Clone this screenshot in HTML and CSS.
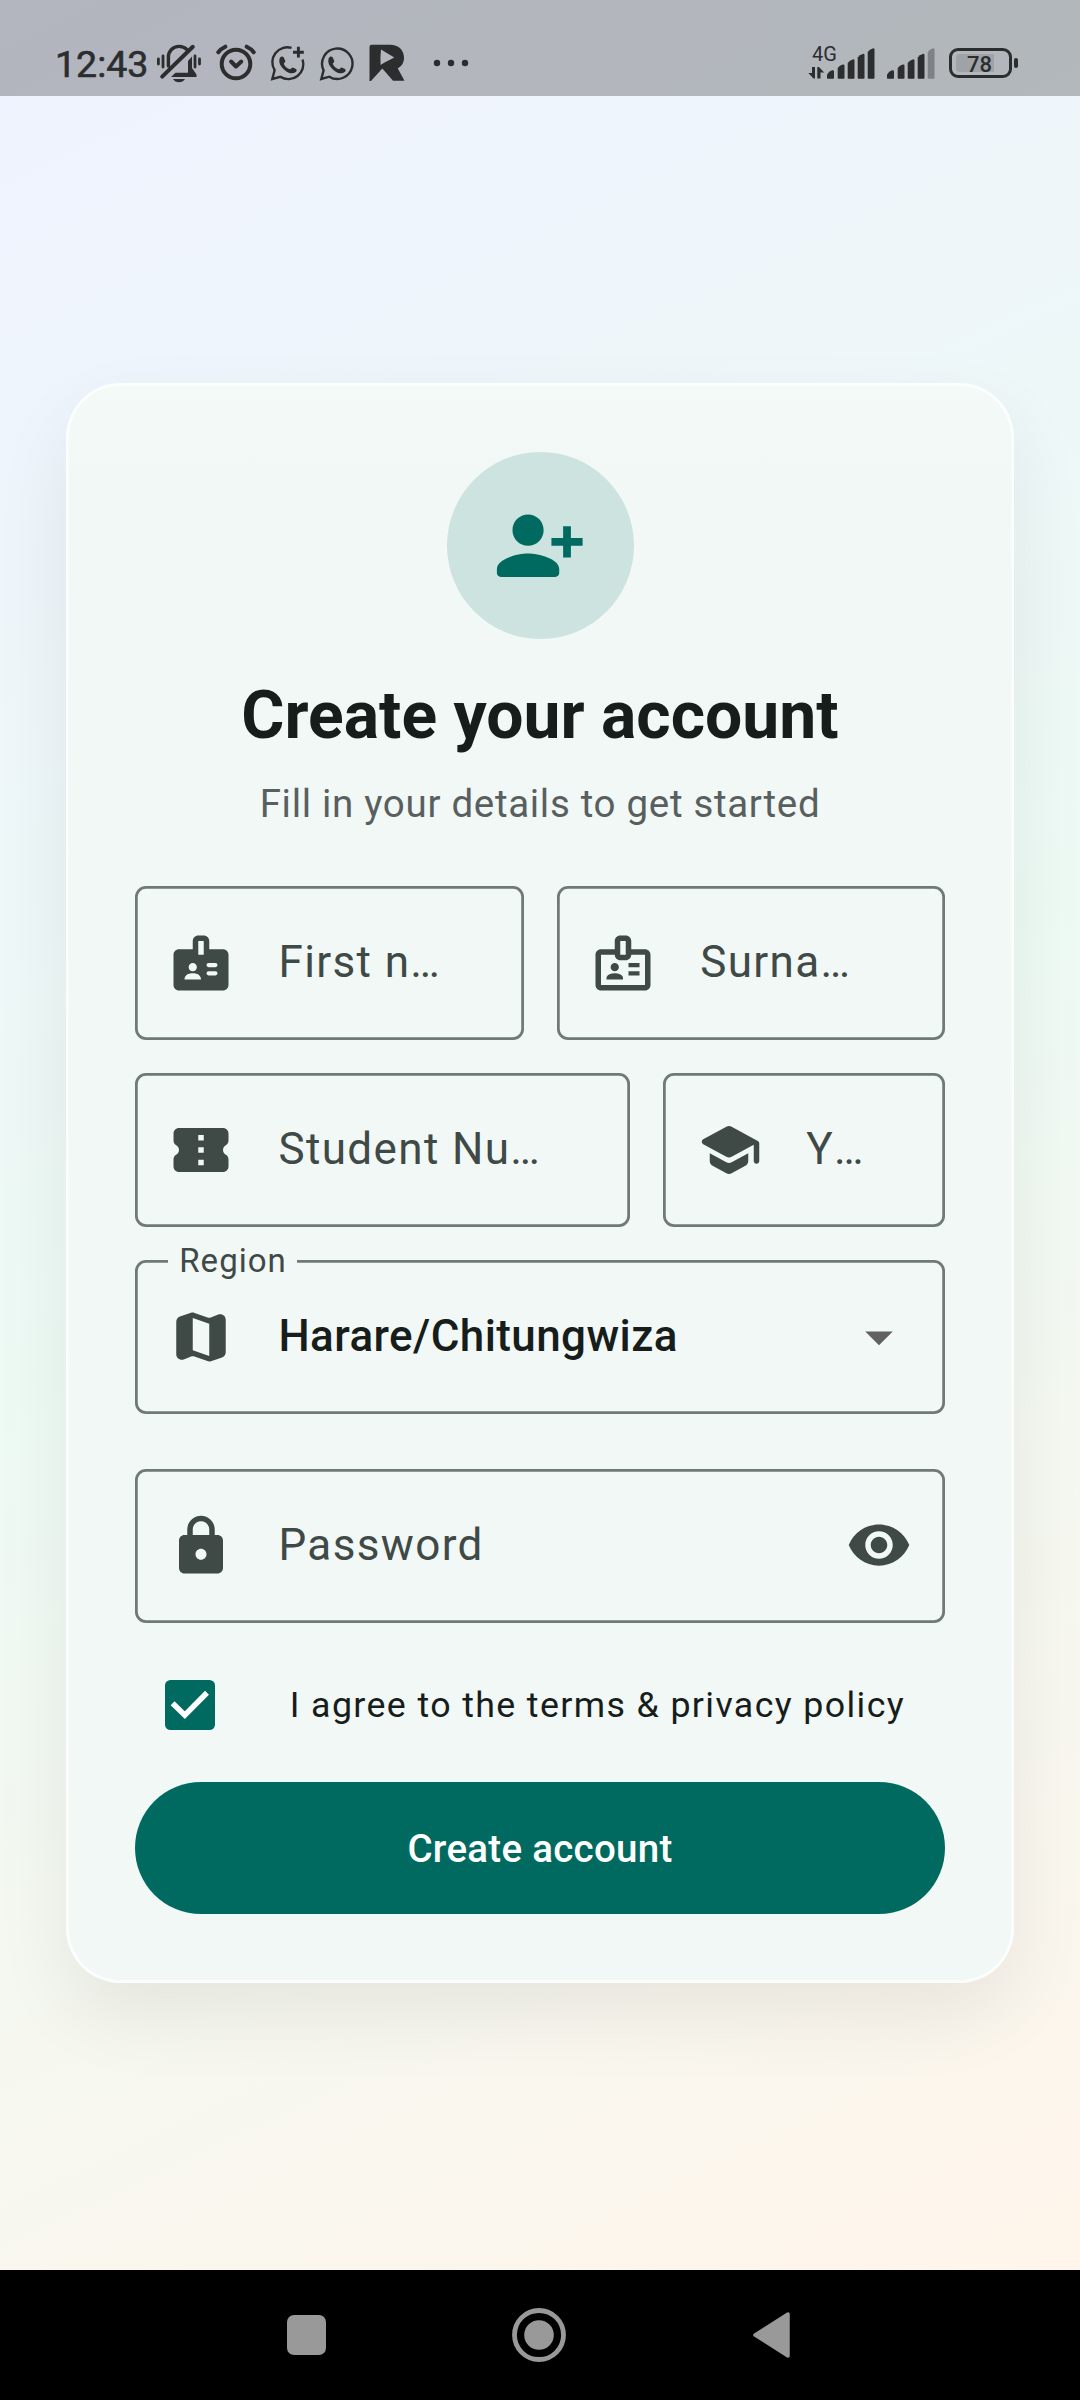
FILE: index.html
```html
<!DOCTYPE html>
<html lang="en">
<head>
<meta charset="utf-8">
<title>Create your account</title>
<link rel="stylesheet" href="styles.css">
</head>
<body>
<header class="status">
  <div class="status-left">
    <span class="clock">12:43</span>
    <svg class="i-bell" width="46" height="42" viewBox="156 43 46 42">
      <g fill="none" stroke="currentColor" stroke-width="3.400" stroke-linecap="round">
        <path d="M168.400 66V57c0-6 4.600-10.600 10.600-10.600 3.500 0 6 1.200 8 3.200"/>
        <path d="M192.800 46.800L162.200 76.600" stroke-width="4"/>
        <path d="M158.400 59v5M163 56v11M195 56v11M199.500 59v5" stroke-width="2.800"/>
      </g>
      <path d="M192 56.500V68l4.500 6.500V77H171l4.500-4.300H188V61z" fill="currentColor"/>
      <path d="M173 79h12c-1.500 2.200-3.500 3.300-6 3.300s-4.500-1.100-6-3.300z" fill="currentColor"/>
    </svg>
    <svg class="i-alarm" width="42" height="40" viewBox="214.500 43 42 40">
      <g fill="none" stroke="currentColor" stroke-width="4" stroke-linecap="round" stroke-linejoin="round">
        <circle cx="235.500" cy="64" r="14.300"/>
        <path d="M217.800 52.200q2.500-3.400 7-5.500M253.200 52.200q-2.500-3.400-7-5.500"/>
        <path d="M230.600 61.500l4.900 5 5.300-5"/>
      </g>
    </svg>
    <svg class="i-wa1" width="36" height="36" viewBox="269.500 45 36 36">
      <path d="M291 47.900a15 15 0 0 0-16.900 22.300L271.800 79l8-2.200a15 15 0 0 0 22.300-17.300" fill="none" stroke="currentColor" stroke-width="2.400"/>
      <path d="M292.500 52.200h10.800M297.900 46.800v10.800" stroke="currentColor" stroke-width="2.900"/>
      <path transform="translate(-49.500 0)" d="M328.800 58c1-2 3-2.100 4-.5l1.500 3.500c0 1.500-1.600 2-1.500 3 1.500 3 3.500 4.500 6 5.300 1 0 2-2 3-1.900l3.200 1.600c1.200 1 .5 2.400-.3 3.100-3 2.300-7 1-10-1.200-3.300-2.500-5.800-5.600-6.300-8.400-.2-1.600 0-3.300.4-4.500z" fill="currentColor"/>
    </svg>
    <svg class="i-wa2" width="36" height="36" viewBox="319 45 36 36">
      <path d="M321.300 79l2.300-8.600a15.200 15.200 0 1 1 5.700 6.300z" fill="none" stroke="currentColor" stroke-width="2.400"/>
      <path d="M328.800 58c1-2 3-2.100 4-.5l1.500 3.500c0 1.500-1.600 2-1.500 3 1.500 3 3.500 4.500 6 5.300 1 0 2-2 3-1.900l3.200 1.600c1.200 1 .5 2.400-.3 3.100-3 2.300-7 1-10-1.200-3.300-2.500-5.800-5.600-6.300-8.400-.2-1.600 0-3.300.4-4.500z" fill="currentColor"/>
    </svg>
    <svg class="i-r" width="36" height="38" viewBox="369 44 36 38">
      <path fill="currentColor" fill-rule="evenodd" d="M371.500 44.700H390c8.500 0 14 5.300 14 13 0 5-2.400 8.600-6.300 10.600l6.800 12.400H393l-10.700-12.200L371 81h-1.500V46.700a2 2 0 0 1 2-2zM381 49.500q-.9 7.500-.4 15.500l3.500-2.300 10.200-5.200z"/>
    </svg>
    <svg class="i-dots" width="36" height="8" viewBox="433 59 36 8">
      <g fill="currentColor"><circle cx="437" cy="63" r="3.200"/><circle cx="451" cy="63" r="3.200"/><circle cx="465" cy="63" r="3.200"/></g>
    </svg>
  </div>
  <div class="status-right">
    <div class="net">
      <span class="net-type">4G</span>
      <svg width="17" height="12" viewBox="808 67 17 12"><path fill="currentColor" d="M812 67h3v11.500h-1.500L808.300 73h3.700zM817.300 67h1.700l5.200 5.500h-3.700v6h-3.200z"/></svg>
    </div>
    <svg class="bars" width="48" height="31" viewBox="0 0 48 31">
      <g fill="currentColor"><path d="M0 30V26.500Q2 23 5 22.300q2-.3 2 1V30q0 .8-.8.800H.8Q0 30.800 0 30z"/><path d="M10.700 30V20q2-2.800 5-3.500 1.800-.2 1.800 1V30q0 .8-.8.800h-5.200q-.8 0-.8-.8z"/><path d="M20.700 30V15q2-3 5-3.600 1.800-.2 1.800 1V30q0 .8-.8.800h-5.200q-.8 0-.8-.8z"/><path d="M30.700 30V9.500q2-3 5-3.600 1.800-.2 1.800 1V30q0 .8-.8.800h-5.200q-.8 0-.8-.8z"/><path d="M40.700 30V4q2-3 5-3.600 1.800-.2 1.800 1V30q0 .8-.8.800h-5.200q-.8 0-.8-.8z"/></g>
    </svg>
    <svg class="bars bars-2" width="48" height="31" viewBox="0 0 48 31">
      <g fill="currentColor"><path d="M0 30V26.500Q2 23 5 22.300q2-.3 2 1V30q0 .8-.8.800H.8Q0 30.800 0 30z"/><path d="M10.700 30V20q2-2.800 5-3.500 1.800-.2 1.800 1V30q0 .8-.8.800h-5.200q-.8 0-.8-.8z"/><path d="M20.700 30V15q2-3 5-3.600 1.800-.2 1.800 1V30q0 .8-.8.800h-5.200q-.8 0-.8-.8z"/><path d="M30.700 30V9.500q2-3 5-3.600 1.800-.2 1.800 1V30q0 .8-.8.800h-5.200q-.8 0-.8-.8z"/><path opacity=".38" d="M40.700 30V4q2-3 5-3.600 1.800-.2 1.800 1V30q0 .8-.8.800h-5.200q-.8 0-.8-.8z"/></g>
    </svg>
    <div class="battery"><span class="battery-level">78</span></div>
    <i class="battery-nub"></i>
  </div>
</header>

<main class="screen">
  <form class="card">
    <div class="avatar">
      <svg width="93.500" height="93.500" viewBox="0 0 24 24"><path fill="currentColor" d="M13 8c0-2.210-1.790-4-4-4S5 5.790 5 8s1.790 4 4 4 4-1.790 4-4zm2 2v2h3v3h2v-3h3v-2h-3V7h-2v3h-3zM1 18v1c0 .55.45 1 1 1h14c.55 0 1-.45 1-1v-1c0-2.660-5.330-4-8-4s-8 1.340-8 4z"/></svg>
    </div>
    <h1 class="title">Create your account</h1>
    <p class="subtitle">Fill in your details to get started</p>

    <div class="row">
      <div class="field">
        <svg class="icon" viewBox="0 0 24 24"><path fill="currentColor" fill-rule="evenodd" d="M20 7h-5V4c0-1.100-.9-2-2-2h-2c-1.100 0-2 .9-2 2v3H4c-1.100 0-2 .9-2 2v11c0 1.100.9 2 2 2h16c1.100 0 2-.9 2-2V9c0-1.100-.9-2-2-2zM9 12c.83 0 1.500.67 1.500 1.500S9.830 15 9 15s-1.500-.67-1.500-1.500S8.170 12 9 12zm3 6H6c0-1.500 1.300-2.250 3-2.250s3 .75 3 2.250zm1-9h-2V4h2v5zm4.250 7.500h-2.500a.75.75 0 0 1 0-1.500h2.500a.75.75 0 0 1 0 1.500zm0-3h-2.500a.75.75 0 0 1 0-1.500h2.500a.75.75 0 0 1 0 1.500z"/></svg>
        <span class="label">First n…</span>
      </div>
      <div class="field">
        <svg class="icon" viewBox="0 0 24 24"><path fill="currentColor" fill-rule="evenodd" d="M20 7h-5V4c0-1.100-.9-2-2-2h-2c-1.100 0-2 .9-2 2v3H4c-1.100 0-2 .9-2 2v11c0 1.100.9 2 2 2h16c1.100 0 2-.9 2-2V9c0-1.100-.9-2-2-2zm-9-3h2v5h-2V4zm9 16H4V9h5c0 1.100.9 2 2 2h2c1.100 0 2-.9 2-2h5v11z"/><path fill="currentColor" d="M9 12a1.500 1.500 0 1 1 0 3 1.500 1.500 0 0 1 0-3zM6 18v-.43c0-.6.36-1.150.92-1.390A5.300 5.300 0 0 1 9 15.750c.74 0 1.440.15 2.080.43.560.240.920.79.920 1.390V18zM14 12h4v1.500h-4zM14 15h4v1.500h-4z"/></svg>
        <span class="label">Surna…</span>
      </div>
    </div>

    <div class="row row-student">
      <div class="field">
        <svg class="icon" viewBox="0 0 24 24"><path fill="currentColor" d="M20 12c0-.76.43-1.420 1.060-1.760.6-.33.94-1.010.94-1.700V6c0-1.100-.9-2-2-2H4c-1.100 0-1.990.9-1.990 2v2.540c0 .69.330 1.370.94 1.690C3.580 10.580 4 11.240 4 12s-.43 1.430-1.060 1.760c-.6.330-.94 1.010-.94 1.700V18c0 1.100.9 2 2 2h16c1.100 0 2-.9 2-2v-2.540c0-.69-.34-1.370-.94-1.700-.63-.34-1.060-1-1.060-1.760zm-7 5.500h-2v-2h2v2zm0-4.500h-2v-2h2v2zm0-4.500h-2v-2h2v2z"/></svg>
        <span class="label">Student Nu…</span>
      </div>
      <div class="field">
        <svg class="icon" viewBox="0 0 24 24"><path fill="currentColor" d="M5 13.180v2.810c0 .73.4 1.410 1.040 1.760l5 2.730c.6.330 1.320.330 1.920 0l5-2.730c.64-.35 1.040-1.030 1.040-1.760v-2.810l-6.040 3.300c-.6.330-1.320.330-1.920 0L5 13.180zm6.040-9.660l-8.430 4.600c-.69.380-.69 1.380 0 1.760l8.430 4.600c.6.330 1.320.330 1.920 0L21 10.090V16c0 .55.450 1 1 1s1-.45 1-1V9.590c0-.37-.2-.7-.52-.88l-9.520-5.190c-.6-.32-1.320-.32-1.920 0z"/></svg>
        <span class="label label-year">Y…</span>
      </div>
    </div>

    <div class="field field-region">
      <span class="legend">Region</span>
      <svg class="icon" viewBox="0 0 24 24"><path fill="currentColor" d="M14.650 4.980l-5-1.750c-.42-.15-.88-.15-1.300-.01L4.360 4.560C3.550 4.840 3 5.600 3 6.460v11.850c0 1.410 1.410 2.370 2.720 1.860l2.930-1.140c.22-.09.47-.09.69-.01l5 1.750c.42.150.88.150 1.300.01l3.990-1.340c.81-.27 1.360-1.040 1.360-1.900V5.690c0-1.410-1.410-2.370-2.720-1.860l-2.930 1.140c-.22.080-.46.090-.69.010zM15 18.890l-6-2.110V5.110l6 2.110v11.670z"/></svg>
      <span class="value">Harare/Chitungwiza</span>
      <svg class="icon arrow" viewBox="0 0 24 24"><path fill="currentColor" d="M7 10l5 5 5-5z"/></svg>
    </div>

    <div class="field field-password">
      <svg class="icon" viewBox="0 0 24 24"><path fill="currentColor" d="M18 8h-1V6c0-2.760-2.240-5-5-5S7 3.240 7 6v2H6c-1.100 0-2 .9-2 2v10c0 1.100.9 2 2 2h12c1.100 0 2-.9 2-2V10c0-1.100-.9-2-2-2zm-6 9c-1.100 0-2-.9-2-2s.9-2 2-2 2 .9 2 2-.9 2-2 2zM9 8V6c0-1.660 1.340-3 3-3s3 1.340 3 3v2H9z"/></svg>
      <span class="label">Password</span>
      <svg class="icon eye" viewBox="0 0 24 24"><path fill="currentColor" d="M12 4.500C7 4.500 2.730 7.610 1 12c1.730 4.390 6 7.500 11 7.500s9.270-3.110 11-7.500c-1.730-4.390-6-7.500-11-7.500zM12 17c-2.760 0-5-2.240-5-5s2.240-5 5-5 5 2.240 5 5-2.240 5-5 5zm0-8c-1.660 0-3 1.340-3 3s1.340 3 3 3 3-1.340 3-3-1.340-3-3-3z"/></svg>
    </div>

    <div class="terms">
      <span class="checkbox"><svg width="49.500" height="49.500" viewBox="0 0 49.500 49.500"><path d="M7.600 23.300L19.800 35.200L42 12.700" fill="none" stroke="#fff" stroke-width="5.500"/></svg></span>
      <span class="terms-text">I agree to the terms &amp; privacy policy</span>
    </div>
    <button class="submit" type="button">Create account</button>
  </form>
</main>

<nav class="navbar">
  <svg width="39" height="40" viewBox="0 0 39 40"><rect width="39" height="40" rx="7" fill="currentColor"/></svg>
  <svg width="54" height="54" viewBox="0 0 54 54"><circle cx="27" cy="27" r="24.500" fill="none" stroke="currentColor" stroke-width="4.800"/><circle cx="27" cy="27" r="14.800" fill="currentColor"/></svg>
  <svg width="38" height="46" viewBox="0 0 38 46"><path d="M3 23L36 2V44z" fill="currentColor" stroke="currentColor" stroke-width="3.500" stroke-linejoin="round"/></svg>
</nav>
</body>
</html>
```

FILE: styles.css
```css
* { box-sizing: border-box; }

body {
  margin: 0;
  width: 1080px;
  height: 2400px;
  display: flex;
  flex-direction: column;
  overflow: hidden;
  font-family: Roboto, "Noto Sans", sans-serif;
  color: #171d1b;
  background: #000 linear-gradient(154.560deg, #eff2ff 0%, #edfaf4 50%, #fff5eb 100%) 0 0 / 1080px 2270px no-repeat;
}

svg { display: block; flex: none; }

/* Status bar */
.status {
  flex: none;
  height: 96px;
  display: flex;
  justify-content: space-between;
  background: rgba(0, 0, 0, .25);
  color: #2b2d2f;
}
.status-left {
  display: flex;
  align-items: center;
  height: 126px;
  padding-left: 55px;
}
.clock {
  width: 101px;
  padding-top: 2px;
  font-size: 37.500px;
  line-height: 44px;
  font-weight: 400;
  -webkit-text-stroke: .6px currentColor;
  white-space: nowrap;
}
.i-bell { margin-top: 2px; }
.i-alarm { margin-left: 12.500px; }
.i-wa1 { margin-left: 13px; }
.i-wa2 { margin-left: 13.500px; }
.i-r { margin-left: 14px; }
.i-dots { margin-left: 28px; }

.status-right {
  display: flex;
  align-items: flex-start;
  padding: 48px 62px 0 0;
}
.net { width: 28px; margin-right: -8.500px; }
.net-type {
  display: block;
  margin: -3px 0 0 4px;
  font-size: 20px;
  line-height: 18px;
  height: 22px;
  white-space: nowrap;
}
.bars-2 { margin-left: 11.600px; }
.battery {
  width: 63px;
  height: 30px;
  margin-left: 14px;
  padding: 3px 4px;
  border: 3px solid currentColor;
  border-radius: 9px;
}
.battery-level {
  display: block;
  width: 38px;
  height: 18px;
  padding-left: 11px;
  border-radius: 4px 0 0 4px;
  background: #9fa2a6;
  font-size: 22px;
  line-height: 21px;
  font-weight: 500;
}
.battery-nub {
  width: 4px;
  height: 10px;
  margin: 10px 0 0 2px;
  border-radius: 2px;
  background: currentColor;
}

/* Sign-up card */
.screen {
  flex: 1;
  display: flex;
  align-items: center;
  justify-content: center;
}
.card {
  width: 948px;
  padding: 68.750px;
  border-radius: 55px;
  background: linear-gradient(#f3faf8 0, #f1f8f6 80px, #f1f8f6 70%, #f2f8f5 100%);
  box-shadow: inset 0 0 0 2.750px rgba(255, 255, 255, .75), 0 33px 78px rgba(0, 0, 0, .07);
}
.avatar {
  width: 187px;
  height: 187px;
  margin: 0 auto 33px;
  display: flex;
  align-items: center;
  justify-content: center;
  border-radius: 50%;
  background: #cde3df;
  color: #006a60;
}
.title {
  margin: 0 0 16.500px;
  font-size: 66px;
  line-height: 88px;
  font-weight: 700;
  text-align: center;
  white-space: nowrap;
}
.subtitle {
  margin: 0 0 55px;
  font-size: 38.500px;
  line-height: 55px;
  letter-spacing: .6875px;
  text-align: center;
  color: #595f5e;
}
.row {
  display: grid;
  grid-template-columns: 1fr 1fr;
  gap: 33px;
  margin-bottom: 33px;
}
.row-student { grid-template-columns: 7fr 4fr; }
.field {
  position: relative;
  min-width: 0;
  height: 154px;
  display: flex;
  align-items: center;
  padding: 0 33px;
  border-radius: 11px;
  box-shadow: inset 0 0 0 2.750px #6f7977;
  color: #3f4946;
}
.field-region { margin-bottom: 55px; }
.icon { width: 66px; height: 66px; }
.label, .value {
  flex: 1;
  min-width: 0;
  margin-left: 44.700px;
  padding-bottom: 3px;
  font-size: 44px;
  line-height: 52px;
  letter-spacing: 1.375px;
  white-space: nowrap;
}
.label-year { font-kerning: none; }
.value {
  font-weight: 500;
  letter-spacing: .4125px;
  color: #171d1b;
}
/* Floating label breaks the outline */
.legend {
  position: absolute;
  left: 33px;
  top: -19px;
  padding: 0 10.500px 0 11.500px;
  background: #f1f8f6;
  font-size: 33px;
  line-height: 40px;
  letter-spacing: 1.030px;
}
.arrow { color: #616161; }
.eye { margin-bottom: 3px; }

.terms {
  height: 159px;
  display: flex;
  align-items: center;
  padding: 5px 0 0 30px;
}
.checkbox {
  width: 50px;
  height: 50px;
  border-radius: 5.500px;
  background: #006a60;
}
.terms-text {
  margin-left: 75px;
  font-size: 35.750px;
  line-height: 50px;
  letter-spacing: 1.375px;
  white-space: nowrap;
}
.submit {
  display: block;
  width: 100%;
  height: 132px;
  border: 0;
  border-radius: 66px;
  background: #006a60;
  color: #fff;
  font: 500 38.500px/55px Roboto, sans-serif;
  letter-spacing: .275px;
}

/* System navigation */
.navbar {
  flex: none;
  height: 130px;
  display: flex;
  align-items: center;
  gap: 186px;
  padding-left: 287px;
  background: #000;
  color: #999;
}
```
